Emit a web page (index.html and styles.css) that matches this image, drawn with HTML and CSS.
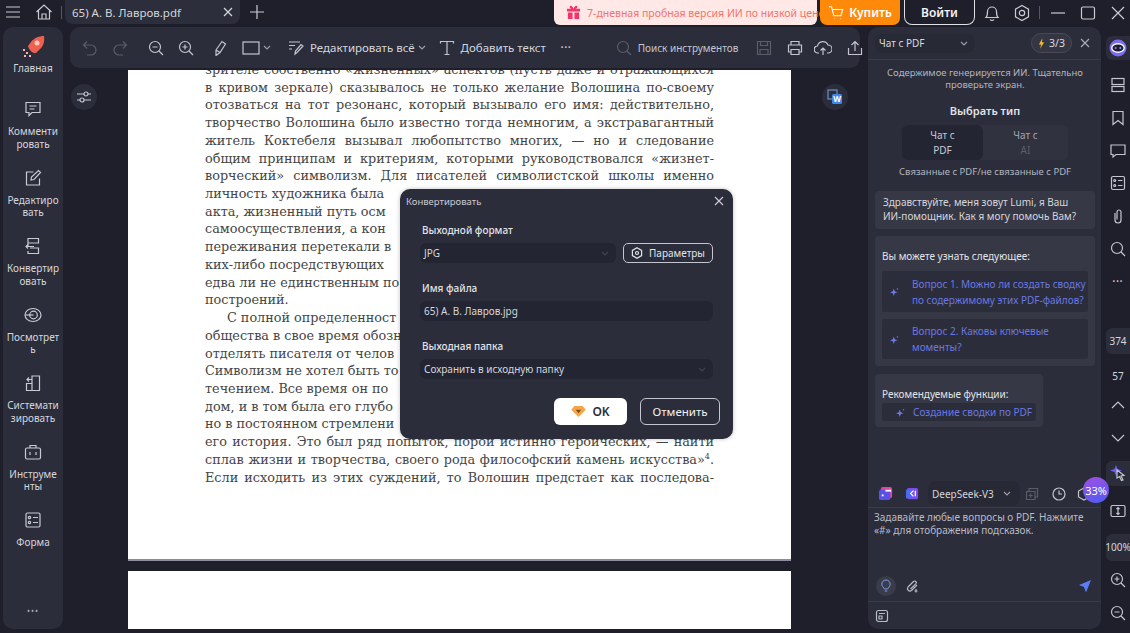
FILE: index.html
```html
<!DOCTYPE html>
<html lang="ru">
<head>
<meta charset="utf-8">
<title>65) А. В. Лавров.pdf</title>
<link rel="stylesheet" href="styles.css">
</head>
<body>
<div class="app">
  <header class="topbar">
    <div class="tb-left">
      <svg class="ic16 menu" viewBox="0 0 16 16"><path d="M1 3h14M1 8h14M1 13h14"/></svg>
      <svg class="ic18 home" viewBox="0 0 18 18"><path d="M1.5 9 9 2l7.500 7M3.500 7.500V16h11V7.500M7 16v-5h4v5"/></svg>
      <span class="vsep"></span>
      <div class="tab"><span>65) А. В. Лавров.pdf</span><svg class="ic10" viewBox="0 0 10 10"><path d="M1 1l8 8M9 1l-8 8"/></svg></div>
      <svg class="ic16 plus" viewBox="0 0 16 16"><path d="M8 1v14M1 8h14"/></svg>
    </div>
    <div class="tb-right">
      <div class="promo">
        <svg class="gift" viewBox="0 0 16 16"><path fill="#f5336b" d="M1 4h14v3H1zM2 8h5v7H2zM9 8h5v7H9zM7.500 4C5 4 3.500 3 4 1.500S7 1 8 4c1-3 3.500-4 4-2.500S11 4 8.500 4z"/></svg>
        <span>7-дневная пробная версия ИИ по низкой цене!</span>
      </div>
      <button class="buy"><svg class="cart" viewBox="0 0 18 18"><path d="M1 2h3l2.500 10h8L16.500 5H5M7 15.500h.5M13.500 15.500h.5"/></svg>Купить</button>
      <button class="login">Войти</button>
      <svg class="ic18 bell" viewBox="0 0 18 18"><path d="M3 13.500c1.500-1.500 1.500-3 1.500-6a4.500 4.500 0 0 1 9 0c0 3 0 4.500 1.500 6zM7 15.500c1 1.300 3 1.300 4 0"/></svg>
      <svg class="ic18 gear" viewBox="0 0 18 18"><path d="M9 1.500l6.500 3.700v7.600L9 16.500l-6.500-3.700V5.200z"/><circle cx="9" cy="9" r="2.700"/></svg>
      <span class="vsep gearsep"></span>
      <svg class="ic16 win1" viewBox="0 0 16 16"><path d="M1 8h14"/></svg>
      <svg class="ic16 win2" viewBox="0 0 16 16"><rect x="1.500" y="2" width="13" height="12" rx="1.500"/></svg>
      <svg class="ic16 win3" viewBox="0 0 16 16"><path d="M2 2l12 12M14 2L2 14"/></svg>
    </div>
  </header>

  <div class="workspace">
    <nav class="sidebar">
      <a class="nav-item first"><svg class="rocket" viewBox="0 0 26 26"><path fill="#f0604f" d="M24 2c1 6-1 11-5 14l-3 3c-3 1-7-3-8-7l3-4c3-4 8-6 13-6z"/><circle cx="17" cy="9" r="2.500" fill="#ffc9bd"/><path fill="#ffb3a6" d="M3 15h2v2H3zM6 18h2v2H6zM4 21h2v2H4zM9 21h2v2H9z"/></svg><span>Главная</span></a>
      <a class="nav-item"><svg class="ic18" viewBox="0 0 18 18"><path d="M2 2.500h14v10H8l-3 3v-3H2zM5.500 6h7M5.500 9h5"/></svg><span>Комменти<br>ровать</span></a>
      <a class="nav-item"><svg class="ic18" viewBox="0 0 18 18"><path d="M15.500 9.500V16h-13V3h7M7 11l.5-3L14.500 1.500l2 2L10 10.500z"/></svg><span>Редактиро<br>вать</span></a>
      <a class="nav-item"><svg class="ic18" viewBox="0 0 18 18"><path d="M4 6V1.500h10.500V6zM6 11h8.500v5.500H4V14M4 6.500v3h6M2 9.500h5M4 7.500 2 9.500l2 2"/></svg><span>Конвертир<br>овать</span></a>
      <a class="nav-item"><svg class="ic18" viewBox="0 0 18 18"><ellipse cx="9" cy="9" rx="8" ry="6.500"/><circle cx="9.500" cy="9" r="3.800"/><path d="M1.500 9h8"/></svg><span>Посмотрет<br>ь</span></a>
      <a class="nav-item"><svg class="ic18" viewBox="0 0 18 18"><path d="M8 2h7.500v14.500H2.500V9.500H8zM8 9.500v7M3 5.500h5M5 3.500l-2 2 2 2"/></svg><span>Системати<br>зировать</span></a>
      <a class="nav-item"><svg class="ic18" viewBox="0 0 18 18"><rect x="1.500" y="5" width="15" height="11" rx="1.500"/><path d="M6 5V2.500h6V5M6 9v3M12 9v3"/></svg><span>Инструме<br>нты</span></a>
      <a class="nav-item"><svg class="ic18" viewBox="0 0 18 18"><rect x="2" y="2" width="14" height="14" rx="1.500"/><circle cx="5.500" cy="6.500" r="1.200"/><circle cx="5.500" cy="11.500" r="1.200"/><path d="M9 6.500h5M9 11.500h5"/></svg><span>Форма</span></a>
      <div class="side-dots">•••</div>
    </nav>

    <main class="center">
      <div class="toolbar">
        <svg class="ic16 dim t-undo" viewBox="0 0 16 16"><path d="M5 1.500 1.500 5 5 8.500M1.500 5H9a5 5 0 0 1 0 10H5"/></svg>
        <svg class="ic16 dim t-redo" viewBox="0 0 16 16"><path d="M11 1.500 14.500 5 11 8.500M14.500 5H7a5 5 0 0 0 0 10h4"/></svg>
        <span class="tsep s-a"></span>
        <svg class="ic16 t-zo" viewBox="0 0 16 16"><circle cx="7" cy="7" r="5.500"/><path d="M11 11l4 4M4.500 7h5"/></svg>
        <svg class="ic16 t-zi" viewBox="0 0 16 16"><circle cx="7" cy="7" r="5.500"/><path d="M11 11l4 4M4.500 7h5M7 4.500v5"/></svg>
        <span class="tsep s-b"></span>
        <svg class="ic16 t-pen" viewBox="0 0 16 16"><path d="M4 10 10 1.500l3.500 2.500-5.500 8.500-4 3zM4 10l4 2.500"/></svg>
        <svg class="rect-ic" viewBox="0 0 18 14"><rect x="1" y="1" width="16" height="12"/></svg>
        <svg class="chev" viewBox="0 0 8 5"><path d="M1 1l3 3 3-3"/></svg>
        <span class="tsep s-c"></span>
        <svg class="ic16 t-edit" viewBox="0 0 16 16"><path d="M1 2h11M1 5.500h6M1 9h3M7 14l.5-3L13 4.500l2 1.500-6 6.500z"/></svg>
        <span class="tlabel l-edit">Редактировать всё</span>
        <svg class="chev c-edit" viewBox="0 0 8 5"><path d="M1 1l3 3 3-3"/></svg>
        <svg class="ic16 t-text" viewBox="0 0 16 16"><path d="M1.500 3.500v-2h13v2M8 1.500v13M5.500 14.500h5"/></svg>
        <span class="tlabel">Добавить текст</span>
        <span class="tsep s-d"></span>
        <span class="t-dots">•••</span>
        <svg class="ic16 dim t-search" viewBox="0 0 16 16"><circle cx="7" cy="7" r="5.500"/><path d="M11 11l4 4"/></svg>
        <span class="t-find">Поиск инструментов</span>
        <svg class="ic16 dim t-save" viewBox="0 0 16 16"><path d="M1.500 1.500h13v13h-13zM4.500 1.500v4h7v-4M4 14.500v-5h8v5"/></svg>
        <svg class="ic16 t-print" viewBox="0 0 16 16"><path d="M4 5V1.500h8V5M4 12H1.500V5h13v7H12M4 9.500h8v5H4z"/></svg>
        <svg class="ic18 t-cloud" viewBox="0 0 18 18"><path d="M5 14H4a3.500 3.500 0 0 1-.5-7A5.500 5.500 0 0 1 14 6a4 4 0 0 1 0 8h-1M9 16V9M6.500 11.500 9 9l2.500 2.500"/></svg>
        <svg class="ic16 t-share" viewBox="0 0 16 16"><path d="M8 11V1.500M4.500 5 8 1.500 11.500 5M1.500 8v6.500h13V8"/></svg>
      </div>

      <div class="viewer">
        <article class="page page-main">
          <div class="text">
            <p>зрителе собственно «жизненных» аспектов (пусть даже и отражающихся</p>
            <p>в кривом зеркале) сказывалось не только желание Волошина по-своему</p>
            <p>отозваться на тот резонанс, который вызывало его имя: действительно,</p>
            <p>творчество Волошина было известно тогда немногим, а экстравагантный</p>
            <p>житель Коктебеля вызывал любопытство многих, — но и следование</p>
            <p>общим принципам и критериям, которыми руководствовался «жизнет-</p>
            <p>ворческий» символизм. Для писателей символистской школы именно</p>
            <p class="cut">личность художника была</p>
            <p class="cut">акта, жизненный путь осм</p>
            <p class="cut">самоосуществления, а кон</p>
            <p class="cut">переживания перетекали в</p>
            <p class="cut">ких-либо посредствующих</p>
            <p class="cut">едва ли не единственным по</p>
            <p class="cut">построений.</p>
            <p class="cut indent">С полной определенност</p>
            <p class="cut">общества в свое время обозн</p>
            <p class="cut">отделять писателя от челов</p>
            <p class="cut">Символизм не хотел быть то</p>
            <p class="cut">течением. Все время он по</p>
            <p class="cut">дом, и в том была его глубо</p>
            <p class="cut">но в постоянном стремлени</p>
            <p>его история. Это был ряд попыток, порой истинно героических, — найти</p>
            <p>сплав жизни и творчества, своего рода философский камень искусства»<sup>4</sup>.</p>
            <p>Если исходить из этих суждений, то Волошин предстает как последова-</p>
          </div>
        </article>
        <div class="page page-next"></div>
        <button class="float-btn filter"><svg class="ic16" viewBox="0 0 16 16"><path d="M1 5h7M12 5h3M1 11h3M8 11h7"/><circle cx="10" cy="5" r="2"/><circle cx="6" cy="11" r="2"/></svg></button>
        <button class="float-btn word"><svg viewBox="0 0 16 16" class="word-ic"><rect x="1" y="1" width="9" height="9" fill="none" stroke="#6d8fc8"/><rect x="5" y="5" width="10" height="10" rx="1.500" fill="#3f86e8"/><text x="10" y="13" class="w-letter">W</text></svg></button>
      </div>
    </main>

    <aside class="ai">
      <div class="ai-head">
        <div class="ai-select"><span>Чат с PDF</span><svg class="chev" viewBox="0 0 8 5"><path d="M1 1l3 3 3-3"/></svg></div>
        <div class="quota"><svg viewBox="0 0 8 12" class="bolt"><path fill="#f5b81e" d="M5 0 1 7h2.500L2.500 12 7 4.500H4.500z"/></svg>3/3</div>
        <svg class="ic10 ai-x" viewBox="0 0 10 10"><path d="M1 1l8 8M9 1l-8 8"/></svg>
      </div>
      <div class="ai-body">
        <p class="note">Содержимое генерируется ИИ. Тщательно проверьте экран.</p>
        <h2 class="choose">Выбрать тип</h2>
        <div class="seg">
          <div class="seg-opt on">Чат с<br>PDF</div>
          <div class="seg-opt">Чат с<br><span class="faint">AI</span></div>
        </div>
        <p class="seg-cap">Связанные с PDF/не связанные с PDF</p>
        <div class="bubble hello">Здравствуйте, меня зовут Lumi, я Ваш ИИ-помощник. Как я могу помочь Вам?</div>
        <div class="bubble learn">
          <h3>Вы можете узнать следующее:</h3>
          <div class="q"><svg class="spark" viewBox="0 0 12 12"><path d="M5 2l1.200 3.800L10 7 6.200 8.200 5 12 3.800 8.200 0 7l3.800-1.200zM10 1l.4 1.100 1.100.4-1.100.4L10 4l-.4-1.100-1.100-.4 1.100-.4z"/></svg><span>Вопрос 1. Можно ли создать сводку по содержимому этих PDF-файлов?</span></div>
          <div class="q"><svg class="spark" viewBox="0 0 12 12"><path d="M5 2l1.200 3.800L10 7 6.200 8.200 5 12 3.800 8.200 0 7l3.800-1.200zM10 1l.4 1.100 1.100.4-1.100.4L10 4l-.4-1.100-1.100-.4 1.100-.4z"/></svg><span>Вопрос 2. Каковы ключевые моменты?</span></div>
        </div>
        <div class="bubble rec">
          <h3>Рекомендуемые функции:</h3>
          <div class="rec-btn"><svg class="spark" viewBox="0 0 12 12"><path d="M5 2l1.200 3.800L10 7 6.200 8.200 5 12 3.800 8.200 0 7l3.800-1.200zM10 1l.4 1.100 1.100.4-1.100.4L10 4l-.4-1.100-1.100-.4 1.100-.4z"/></svg><span>Создание сводки по PDF</span></div>
        </div>
      </div>
      <div class="ai-tools">
        <svg class="app-ic" viewBox="0 0 16 16"><rect x="3" y="1" width="12" height="12" rx="2" fill="#e0479e"/><rect x="1" y="4" width="12" height="11" rx="2" fill="#5a50e8"/><path d="M8 4h6v2H8z" fill="#fff"/><path d="M4 9h2v2H4z" fill="#fff"/></svg>
        <svg class="app-ic second" viewBox="0 0 16 16"><rect x="2" y="2" width="12" height="12" rx="2" fill="#7d4bea"/><rect x="1" y="4" width="7" height="9" fill="#4a6bf0"/><path d="M9 5 6 8l3 3M11 5v6" stroke="#fff" fill="none" stroke-width="1.300"/></svg>
        <div class="model"><span>DeepSeek-V3</span><svg class="chev" viewBox="0 0 8 5"><path d="M1 1l3 3 3-3"/></svg></div>
        <svg class="ic14 dim" viewBox="0 0 14 14"><path d="M4 4V1.500h8.500V10H10M1.500 4.500H10V12.500H1.500zM5.700 6.500v4M3.700 8.500h4"/></svg>
        <svg class="ic14 clock" viewBox="0 0 14 14"><circle cx="7" cy="7" r="6"/><path d="M7 3.500V7h3"/></svg>
        <svg class="ic14 hex" viewBox="0 0 14 14"><path d="M7 1l5.500 3v6L7 13l-5.500-3V4z"/></svg>
      </div>
      <div class="ai-input">
        <p class="hint">Задавайте любые вопросы о PDF. Нажмите «#» для отображения подсказок.</p>
        <div class="input-actions">
          <span class="bulb"><svg viewBox="0 0 12 16"><path d="M4 11.500C3 9.500 1 8.500 1 5.800a5 5 0 0 1 10 0c0 2.700-2 3.700-3 5.700zM4.500 14h3"/></svg></span>
          <svg class="ic14 clip" viewBox="0 0 14 14"><path d="M12 6 6.500 11.500a2.500 2.500 0 0 1-3.500-3.500L8.500 2.500a1.600 1.600 0 0 1 2.300 2.300L5.500 10M11 10v3.500M9.500 12h3"/></svg>
          <svg class="send" viewBox="0 0 14 14"><path fill="#5b7cf7" d="M13 1 1 6l5 2 2 5.500z"/></svg>
        </div>
      </div>
      <div class="ai-foot"><svg class="ic14" viewBox="0 0 14 14"><rect x="1.500" y="1.500" width="11" height="11" rx="2"/><path d="M4 4.500h6M4 7h3v3H4z"/></svg></div>
    </aside>

    <div class="rail">
      <div class="rail-slot active"><svg class="robot" viewBox="0 0 18 18"><circle cx="9" cy="9" r="8.500" fill="#7d6bf0"/><ellipse cx="9" cy="9" rx="7" ry="5" fill="#f1f1ff"/><ellipse cx="9" cy="9" rx="5.500" ry="3.500" fill="#1c1c30"/><circle cx="6.700" cy="9" r="1" fill="#d86bf0"/><circle cx="11.300" cy="9" r="1" fill="#6bb4f0"/></svg></div>
      <div class="rail-slot"><svg class="ic16" viewBox="0 0 16 16"><rect x="2" y="1.500" width="12" height="6"/><rect x="2" y="9.500" width="12" height="5"/></svg></div>
      <div class="rail-slot"><svg class="ic16" viewBox="0 0 16 16"><path d="M3 1.500h10v13L8 10.500l-5 4z"/></svg></div>
      <div class="rail-slot"><svg class="ic16" viewBox="0 0 16 16"><path d="M1 2h14v9.500H6l-3 2.500v-2.500H1z"/></svg></div>
      <div class="rail-slot"><svg class="ic16" viewBox="0 0 16 16"><rect x="1.500" y="1.500" width="13" height="13" rx="1.500"/><circle cx="4.700" cy="5.500" r="1"/><circle cx="4.700" cy="10.500" r="1"/><path d="M8 5.500h4.500M8 10.500h4.500"/></svg></div>
      <div class="rail-slot"><svg class="ic16" viewBox="0 0 16 16"><path d="M5 5v7a3 3 0 0 0 6 0V4a2 2 0 0 0-4 0v7.500"/></svg></div>
      <div class="rail-slot"><svg class="ic16" viewBox="0 0 16 16"><circle cx="7" cy="7" r="5.500"/><path d="M11 11l4 4"/></svg></div>
      <div class="rail-slot dots">•••</div>
      <div class="rail-num active first-num">374</div>
      <div class="rail-num">57</div>
      <div class="rail-slot up"><svg class="ic14" viewBox="0 0 14 14"><path d="M1 10l6-6 6 6"/></svg></div>
      <div class="rail-slot"><svg class="ic14" viewBox="0 0 14 14"><path d="M1 4l6 6 6-6"/></svg></div>
      <div class="rail-slot active ai-star"><svg class="ic18" viewBox="0 0 18 18"><path fill="#6e5ff0" stroke="none" d="M7 1l1.500 4L13 6.500 8.500 8 7 12 5.500 8 1 6.500 5.500 5z"/><path d="M8 6l7 5.500-3 .5 2 4-1.500.5-2-4L8 14z" fill="#24252f"/></svg></div>
      <div class="rail-slot"><svg class="ic16" viewBox="0 0 16 16"><rect x="1" y="2.500" width="14" height="11" rx="1.500"/><path d="M8 4.500v7M6.500 6 8 4.500 9.500 6M6.500 10 8 11.500 9.500 10"/></svg></div>
      <div class="rail-num active zoom">100%</div>
      <div class="rail-slot zin"><svg class="ic16" viewBox="0 0 16 16"><circle cx="7" cy="7" r="5.500"/><path d="M11 11l4 4M4.500 7h5M7 4.500v5"/></svg></div>
      <div class="rail-slot"><svg class="ic16" viewBox="0 0 16 16"><circle cx="7" cy="7" r="5.500"/><path d="M11 11l4 4M4.500 7h5"/></svg></div>
    </div>
  </div>

  <div class="ball">33%</div>

  <section class="modal">
    <div class="modal-head"><span>Конвертировать</span><svg class="ic10" viewBox="0 0 10 10"><path d="M1 1l8 8M9 1l-8 8"/></svg></div>
    <div class="modal-body">
      <label>Выходной формат</label>
      <div class="row">
        <div class="field grow"><span>JPG</span><svg class="chev faint-ch" viewBox="0 0 8 5"><path d="M1 1l3 3 3-3"/></svg></div>
        <button class="params"><svg class="ic12" viewBox="0 0 12 12"><path d="M6 .8l4.600 2.600v5.200L6 11.200 1.400 8.600V3.400z"/><circle cx="6" cy="6" r="1.500"/></svg>Параметры</button>
      </div>
      <label>Имя файла</label>
      <div class="field"><span>65) А. В. Лавров.jpg</span></div>
      <label>Выходная папка</label>
      <div class="field"><span>Сохранить в исходную папку</span><svg class="chev faint-ch" viewBox="0 0 8 5"><path d="M1 1l3 3 3-3"/></svg></div>
    </div>
    <div class="modal-foot">
      <button class="ok"><svg class="gem" viewBox="0 0 16 12"><path fill="#f3a64a" d="M3.500 0h9L16 4 8 12 0 4z"/><path fill="#8a4a10" d="M5 4h6L8 8z"/></svg>OK</button>
      <button class="cancel">Отменить</button>
    </div>
  </section>
</div>
</body>
</html>
```

FILE: styles.css
```css
* { box-sizing: border-box; }
html, body { margin: 0; height: 100%; overflow: hidden; }
body { background: #1e1f2b; font-family: "Noto Sans", "Open Sans", sans-serif; color: #d9dae0; }
p, h2, h3 { margin: 0; font-weight: normal; }
button { font-family: inherit; cursor: default; }
svg { fill: none; stroke: currentColor; stroke-width: 1.200; flex: none; display: block; }
.ic10 { width: 10px; height: 10px; }
.ic12 { width: 12px; height: 12px; }
.ic14 { width: 14px; height: 14px; }
.ic16 { width: 16px; height: 16px; }
.ic18 { width: 18px; height: 18px; }
.dim { color: #5a5c69; }
.chev { width: 8px; height: 5px; color: #9a9ca8; }

.app { position: relative; width: 1130px; height: 633px; display: flex; flex-direction: column; overflow: hidden; }

/* top bar */
.topbar { height: 27px; flex: none; display: flex; justify-content: space-between; align-items: flex-start; }
.tb-left { display: flex; align-items: center; height: 24px; padding-left: 5px; color: #c9cad2; }
.menu { margin-right: 14px; }
.home { margin-right: 8px; }
.vsep { width: 1px; height: 13px; background: #555764; }
.tab { width: 175px; height: 24px; margin-left: 3px; padding: 0 7px; background: #2c2e3b; border-radius: 0 0 8px 8px; display: flex; align-items: center; justify-content: space-between; font-size: 11.5px; color: #d5d6dc; }
.plus { margin-left: 9px; }
.tb-right { display: flex; align-items: center; height: 25px; color: #c9cad2; padding-right: 4px; }
.promo { width: 263px; height: 25px; background: #ffe8e6; border-radius: 0 0 6px 6px; display: flex; align-items: center; padding-left: 12px; gap: 6px; font-size: 10.5px; color: #f1746c; margin-right: 3px; white-space: nowrap; }
.gift { width: 15px; height: 15px; stroke: none; }
.buy { width: 80px; height: 25px; background: #ff8a0a; border: 0; border-radius: 0 0 7px 7px; color: #fff; font-size: 12px; font-weight: 600; display: flex; align-items: center; justify-content: center; gap: 5px; padding: 0; margin-right: 4px; }
.cart { width: 16px; height: 16px; color: #fff; }
.login { width: 71px; height: 25px; background: transparent; border: 1px solid #dfe0e4; border-top: 0; border-radius: 0 0 8px 8px; color: #f2f2f4; font-size: 12px; font-weight: 600; margin-right: 8px; padding: 0; }
.bell { margin-right: 12px; }
.gear { margin-right: 8px; }
.gearsep { margin-right: 10px; }
.win1 { margin-right: 14px; }
.win2 { margin-right: 14px; }

/* workspace */
.workspace { flex: 1; min-height: 0; display: flex; padding-bottom: 4px; }

.sidebar { width: 60px; margin-left: 3px; background: #2b2d3b; border-radius: 10px; display: flex; flex-direction: column; align-items: center; padding-top: 7px; position: relative; flex: none; }
.nav-item { display: flex; flex-direction: column; align-items: center; height: 68.500px; color: #c9cad2; }
.nav-item.first { height: 65px; }
.nav-item + .nav-item { padding-top: 1px; }
.nav-item span { margin-top: 7px; font-size: 10px; line-height: 12.700px; text-align: center; color: #d5d6dc; white-space: nowrap; }
.nav-item.first span { margin-top: 2px; }
.rocket { width: 26px; height: 26px; stroke: none; }
.side-dots { margin-top: auto; padding-bottom: 13px; font-size: 8px; letter-spacing: 1px; color: #a9abb6; }

.center { width: 805px; flex: none; display: flex; flex-direction: column; min-width: 0; position: relative; }
.toolbar { height: 41px; margin: 0 8px 2px 7px; background: #2b2d3b; border-radius: 10px; display: flex; align-items: center; color: #c4c5ce; flex: none; padding-left: 12px; }
.t-redo { margin-left: 14px; }
.tsep { width: 1px; height: 12px; background: #4b4d5a; }
.s-a { margin-left: 8px; }
.t-zo { margin-left: 12px; }
.t-zi { margin-left: 14px; }
.s-b { margin-left: 9px; }
.t-pen { margin-left: 9px; }
.rect-ic { width: 18px; height: 14px; margin-left: 14px; }
.rect-ic + .chev { margin-left: 3px; }
.s-c { margin-left: 8px; }
.t-edit { margin-left: 9px; }
.tlabel { font-size: 11.500px; color: #d5d6dc; white-space: nowrap; margin-left: 6px; }
.c-edit { margin-left: 3px; }
.t-text { margin-left: 13px; }
.s-d { margin-left: 5px; }
.t-dots { font-size: 7px; letter-spacing: 1px; margin-left: 10px; }
.t-search { margin-left: 44px; }
.t-find { font-size: 10px; margin-left: 6px; white-space: nowrap; }
.t-save { margin-left: 18px; }
.t-print { margin-left: 15px; }
.t-cloud { margin-left: 11px; }
.t-share { margin-left: 15px; }

.viewer { flex: 1; min-height: 0; overflow: hidden; position: relative; padding-left: 65px; }
.page { width: 663px; background: #fff; }
.page-main { height: 491px; border-bottom: 2px solid #8c8da0; overflow: hidden; padding-left: 77px; }
.page-next { height: 60px; margin-top: 10px; }
.text { width: 509px; margin-top: -9px; font-family: "DejaVu Serif", "Liberation Serif", serif; font-size: 12.800px; line-height: 17.720px; color: #454545; }
.text p { white-space: nowrap; text-align: justify; text-align-last: justify; }
.text p.cut { text-align-last: left; }
.text p.indent { text-indent: 22px; }
.text sup { font-size: 8px; line-height: 0; }
.float-btn { position: absolute; width: 26px; height: 26px; border-radius: 50%; background: #2b2d3b; border: 0; padding: 0; display: flex; align-items: center; justify-content: center; color: #c4c5ce; }
.filter { left: 8px; top: 14px; }
.word { left: 759px; top: 14px; }
.word-ic { width: 16px; height: 16px; stroke: none; }
.w-letter { font-size: 8px; font-weight: 700; fill: #fff; text-anchor: middle; stroke: none; }

/* assistant */
.ai { width: 233px; flex: none; background: #2b2d3b; border-radius: 10px; display: flex; flex-direction: column; }
.ai-head { height: 33px; border-bottom: 1px solid #3a3c49; display: flex; align-items: center; padding: 0 11px 0 7px; flex: none; }
.ai-select { width: 100px; height: 19px; background: #272935; border-radius: 8px; padding: 0 4px; display: flex; align-items: center; justify-content: space-between; font-size: 10px; padding-right: 7px; }
.quota { width: 41px; height: 20px; margin-left: auto; border: 1px solid #484a57; border-radius: 10px; background: #343643; display: flex; align-items: center; justify-content: center; gap: 4px; font-size: 10.500px; }
.bolt { width: 7px; height: 11px; stroke: none; }
.ai-x { margin-left: 8px; color: #a9abb6; }
.ai-body { flex: 1; padding: 7px 6px 0 7px; min-height: 0; }
.note { font-size: 9.500px; line-height: 11.500px; text-align: center; color: #b3b5bf; padding: 0 12px; }
.choose { font-size: 11px; font-weight: 600; text-align: center; color: #e2e3e8; margin-top: 13px; line-height: 15px; }
.seg { width: 166px; height: 35px; margin: 7px 0 0 27px; background: #30323f; border-radius: 6px; display: flex; }
.seg-opt { flex: 0 0 85px; text-align: center; font-size: 10px; line-height: 14.500px; padding-top: 3px; color: #a5a7b2; }
.seg-opt.on { flex: 0 0 81px; background: #232532; border-radius: 6px; color: #c9cad2; }
.faint { color: #5c5e6b; }
.seg-cap { font-size: 9.500px; text-align: center; color: #b3b5bf; margin-top: 5px; line-height: 13px; }
.bubble { background: #363845; border-radius: 4px; }
.hello { margin-top: 13px; height: 38px; padding: 5px 8px; font-size: 10px; line-height: 13.500px; color: #d5d6dc; }
.learn { margin-top: 7px; height: 130px; padding: 13px 7px 0; }
h3 { font-size: 10px; line-height: 14px; color: #e2e3e8; }
.q { height: 41px; margin-top: 8px; background: #2b2d3b; display: flex; align-items: center; font-size: 10px; line-height: 16px; color: #6a78e0; border-radius: 2px; }
.q + .q { margin-top: 7px; height: 40px; }
.spark { width: 9px; height: 9px; margin: 0 13px 0 8px; fill: #6f7be8; stroke: none; }
.learn h3 { margin-left: 0; }
.rec { margin-top: 8px; width: 168px; height: 53px; padding: 13px 7px 0; }
.rec-btn { height: 18px; margin-top: 2px; background: #2b2d3b; border-radius: 2px; display: flex; align-items: center; font-size: 10px; color: #6a78e0; }
.rec-btn .spark { margin: 0 8px 0 14px; }
.ai-tools { height: 28px; flex: none; border-bottom: 1px solid #3a3c49; display: flex; align-items: center; padding-left: 10px; color: #c4c5ce; }
.app-ic { width: 15px; height: 15px; stroke: none; }
.app-ic.second { margin-left: 12px; }
.model { width: 92px; height: 25px; margin-left: 8px; background: #272935; border-radius: 8px; display: flex; align-items: center; justify-content: space-between; padding: 0 9px 0 4px; font-size: 10px; color: #d5d6dc; margin-right: 5px; }
.clock { margin-left: 13px; }
.hex { margin-left: 11px; }
.ai-input { flex: none; height: 94px; border-bottom: 1px solid #3a3c49; padding: 3px 6px 0; display: flex; flex-direction: column; }
.hint { font-size: 10px; line-height: 13px; color: #b9bbc5; }
.input-actions { margin-top: auto; margin-bottom: 5px; display: flex; align-items: center; }
.bulb { width: 20px; height: 20px; border-radius: 50%; background: #3a3c49; display: flex; align-items: center; justify-content: center; margin-left: 2px; color: #7fa0f5; }
.bulb svg { width: 10px; height: 14px; }
.clip { margin-left: 9px; color: #b9bbc5; }
.send { width: 14px; height: 14px; margin-left: auto; stroke: none; margin-right: 3px; }
.ai-foot { height: 27px; flex: none; display: flex; align-items: center; padding-left: 7px; color: #b9bbc5; }

/* right rail */
.rail { flex: 1; display: flex; flex-direction: column; align-items: flex-end; padding-top: 9px; color: #c4c5ce; }
.rail-slot { width: 24px; height: 33.200px; display: flex; align-items: center; justify-content: center; }
.rail-slot.active { background: #2b2d3b; border-radius: 6px 0 0 6px; height: 24px; margin-bottom: 9px; }
.rail-slot.active.ai-star { margin-top: 6px; margin-bottom: 8px; height: 26px; }
.robot { width: 18px; height: 18px; stroke: none; }
.rail-slot.dots { font-size: 7px; letter-spacing: 1px; }
.rail-num { width: 24px; height: 27px; display: flex; align-items: center; justify-content: center; font-size: 10px; color: #d5d6dc; white-space: nowrap; }
.rail-num.active { background: #2b2d3b; border-radius: 6px 0 0 6px; }
.first-num { margin-top: 30px; }
.rail-num + .rail-num { margin-top: 8px; }
.up { margin-top: 0; }
.zoom { margin-top: 7px; }
.zin { margin-top: 3px; }

.ball { position: absolute; left: 1083px; top: 477px; width: 26px; height: 26px; border-radius: 50%; background: linear-gradient(160deg, #a24fe0, #4a5cf5); color: #fff; font-size: 11px; display: flex; align-items: center; justify-content: center; }

/* dialog */
.modal { position: absolute; left: 400px; top: 189px; width: 333px; height: 250px; background: #2b2d3b; border-radius: 10px; box-shadow: 0 0 4px rgba(0,0,0,.25); display: flex; flex-direction: column; }
.modal-head { height: 24px; padding: 0 9px 0 6px; display: flex; align-items: center; justify-content: space-between; font-size: 9.500px; color: #c9cad2; }
.modal-body { padding: 10px 20px 0 20px; }
.modal-body label { display: block; font-size: 10px; line-height: 14px; color: #e2e3e8; padding-left: 2px; margin: 18px 0 6px; font-weight: 500; }
.modal-body label:first-child { margin-top: 0; }
.row { display: flex; gap: 7px; }
.field { height: 20px; background: #232532; border-radius: 6px; display: flex; align-items: center; justify-content: space-between; padding: 0 4px; font-size: 10px; color: #d5d6dc; }
.grow { flex: 1; }
.faint-ch { color: #40424f; margin-right: 3px; }
.params { width: 90px; height: 20px; background: transparent; border: 1px solid #c4c5ce; border-radius: 5px; color: #e2e3e8; font-size: 10px; display: flex; align-items: center; justify-content: center; gap: 6px; padding: 0; }
.modal-foot { margin-top: auto; display: flex; justify-content: flex-end; gap: 13px; padding: 0 13px 14px 0; }
.ok { width: 73px; height: 27px; background: #fff; border: 0; border-radius: 6px; color: #2b2d3b; font-size: 12px; font-weight: 600; display: flex; align-items: center; justify-content: center; gap: 6px; padding: 0; }
.gem { width: 15px; height: 11px; stroke: none; }
.cancel { width: 80px; height: 27px; background: transparent; border: 1px solid #c4c5ce; border-radius: 6px; color: #f2f2f4; font-size: 11.500px; padding: 0; }
```
